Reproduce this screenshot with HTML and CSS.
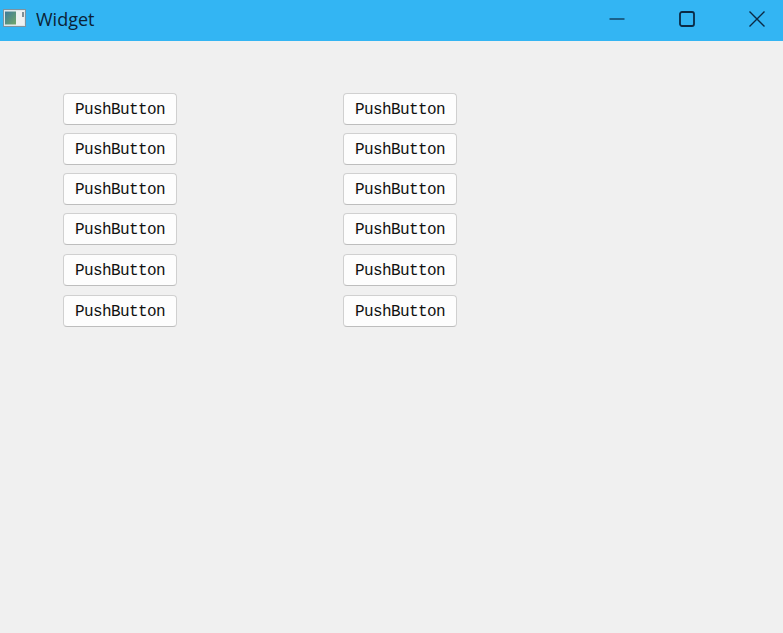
FILE: index.html
```html
<!DOCTYPE html>
<html lang="en">
<head>
<meta charset="utf-8">
<title>Widget</title>
<link rel="stylesheet" href="styles.css">
</head>
<body>
<div class="titlebar">
  <svg class="app-icon" width="23" height="18" viewBox="0 0 23 18">
    <defs><linearGradient id="g" x1="0" y1="0" x2="1" y2="1"><stop offset="0" stop-color="#3d7a9c"/><stop offset="1" stop-color="#72a868"/></linearGradient></defs>
    <rect x="0.5" y="0.5" width="22" height="17" fill="#dfe7ea" stroke="#7d93a0"/>
    <rect x="2" y="2" width="19" height="14" fill="#eef1f1"/>
    <rect x="2" y="2.5" width="11" height="13" fill="url(#g)"/>
    <rect x="19" y="3" width="2" height="5" fill="#7f8f96"/>
  </svg>
  <span class="title">Widget</span>
  <div class="controls">
    <svg class="ctl ctl-min" width="16" height="16" viewBox="0 0 16 16"><path d="M0.5 8H15.5" stroke="#0b2a45" stroke-width="1.2" fill="none"/></svg>
    <svg class="ctl ctl-max" width="16" height="16" viewBox="0 0 16 16"><rect x="1" y="1" width="14" height="14" rx="2" stroke="#0b2a45" stroke-width="1.8" fill="none"/></svg>
    <svg class="ctl ctl-close" width="18" height="18" viewBox="0 0 18 18"><path d="M1.5 1.5L16.5 16.5M16.5 1.5L1.5 16.5" stroke="#0b2a45" stroke-width="1.4" fill="none"/></svg>
  </div>
</div>
<main class="content">
  <div class="col">
    <button class="btn">PushButton</button>
    <button class="btn">PushButton</button>
    <button class="btn">PushButton</button>
    <button class="btn">PushButton</button>
    <button class="btn wide">PushButton</button>
    <button class="btn wide">PushButton</button>
  </div>
  <div class="col">
    <button class="btn">PushButton</button>
    <button class="btn">PushButton</button>
    <button class="btn">PushButton</button>
    <button class="btn">PushButton</button>
    <button class="btn wide">PushButton</button>
    <button class="btn wide">PushButton</button>
  </div>
</main>
</body>
</html>
```
FILE: styles.css
```css
html, body {
  margin: 0;
  padding: 0;
  height: 100%;
  background: #f0f0f0;
  overflow: hidden;
}
.titlebar {
  height: 41px;
  background: #33b5f3;
  display: flex;
  align-items: center;
  font-family: "Open Sans", "Noto Sans", sans-serif;
}
.app-icon {
  margin-left: 3px;
  margin-top: -5px;
  flex: none;
}
.title {
  margin-left: 10px;
  font-size: 18px;
  color: #0b2236;
  margin-top: -4px;
}
.controls {
  margin-left: auto;
  display: flex;
  align-items: center;
  margin-top: -4px;
}
.ctl { display: block; flex: none; }
.ctl-min { margin-right: 54px; margin-left: -1px; }
.ctl-max { margin-right: 53px; }
.ctl-close { margin-right: 17px; }
.content {
  display: flex;
  gap: 166px;
  padding: 52px 0 0 63px;
}
.col {
  display: flex;
  flex-direction: column;
  gap: 8px;
}
.btn {
  box-sizing: border-box;
  width: 114px;
  height: 32px;
  margin: 0;
  padding: 2px 0 0;
  background: #fdfdfd;
  border: 1px solid #d0d0d0;
  border-bottom-color: #bdbdbd;
  border-radius: 4px;
  color: #111;
  font-family: "Liberation Mono", monospace;
  font-size: 16px;
  letter-spacing: -0.6px;
}
.btn.wide { margin-top: 1px; }
```
